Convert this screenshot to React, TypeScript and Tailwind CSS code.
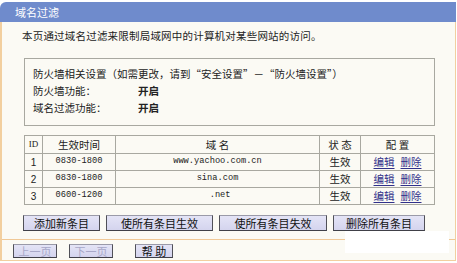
import React from "react";

const cjk = "font-['SimSun','Noto_Sans_CJK_SC',sans-serif]";

const rows = [
  { id: "1", time: "0830-1800", domain: "www.yachoo.com.cn" },
  { id: "2", time: "0830-1800", domain: "sina.com" },
  { id: "3", time: "0600-1200", domain: " .net" },
];

const Btn = ({ children, w, disabled }: { children: React.ReactNode; w: string; disabled?: boolean }) => (
  <button
    className={`${w} flex items-center justify-center border border-t-[#9a9aa8] border-l-[#505058] border-r-[#505058] border-b-[#404048] bg-gradient-to-b from-[#e4e4f6] to-[#d4d4ee] leading-none ${
      disabled ? "text-[#a8a8c8] border-[#9a9ab8]" : "text-[#111]"
    }`}
    disabled={disabled}
  >
    {children}
  </button>
);

export default function App() {
  return (
    <div className={`w-[457px] h-[263px] bg-white pt-[2px] text-[10.5px] text-[#222] ${cjk}`}>
      <div className="w-[456px] rounded-tl-[6px] overflow-hidden">
        <div className="h-[20px] bg-[#6f8bcc] text-white pl-[15px] flex items-center text-[11px]">
          域名过滤
        </div>
        <div className="relative h-[239px] bg-[#fbfaf4] border-l-2 border-r border-b border-[#f2cf9f]">
          <p className="pl-[20px] pt-[8px] leading-[12px] tracking-[0.2px]">
            本页通过域名过滤来限制局域网中的计算机对某些网站的访问。
          </p>

          <div className="ml-[22px] mt-[16px] w-[411px] border border-[#a8a8a0] pt-[6px] pb-[9px] pl-[8px] leading-[17px]">
            <div>防火墙相关设置（如需更改，请到“安全设置”－“防火墙设置”）</div>
            <div className="flex">
              <span className="w-[105px]">防火墙功能：</span>
              <span className="font-bold">开启</span>
            </div>
            <div className="flex">
              <span className="w-[105px]">域名过滤功能：</span>
              <span className="font-bold">开启</span>
            </div>
          </div>

          <div className="ml-[22px] mt-[9px] w-[411px] grid grid-cols-[18px_73px_204px_41px_74px] border-t border-l border-[#a8a8a0]">
            {["ID", "生效时间", "域 名", "状 态", "配 置"].map((h, i) => (
              <div
                key={h}
                className={`h-[18px] flex items-center border-r border-b border-[#a8a8a0] ${
                  i === 0 ? "justify-center font-['Liberation_Serif',serif] text-[9px]" : "justify-center"
                }`}
              >
                {h}
              </div>
            ))}
            {rows.map((r) => (
              <React.Fragment key={r.id}>
                <div className="h-[17px] flex items-center justify-center border-r border-b border-[#a8a8a0] font-['Liberation_Sans',sans-serif] text-[10px]">
                  {r.id}
                </div>
                <div className="h-[17px] flex items-center justify-center border-r border-b border-[#a8a8a0] font-['Liberation_Mono',monospace] text-[8.7px]">
                  {r.time}
                </div>
                <div className="h-[17px] flex items-center justify-center border-r border-b border-[#a8a8a0] font-['Liberation_Mono',monospace] text-[8.7px] whitespace-pre">
                  {r.domain}
                </div>
                <div className="h-[17px] flex items-center justify-center border-r border-b border-[#a8a8a0]">
                  生效
                </div>
                <div className="h-[17px] flex items-center justify-center gap-[6px] border-r border-b border-[#a8a8a0] text-[#30308a]">
                  <a className="underline underline-offset-2">编辑</a>
                  <a className="underline underline-offset-2">删除</a>
                </div>
              </React.Fragment>
            ))}
          </div>

          <div className="ml-[21px] mt-[10px] flex gap-[6px] h-[16px] text-[11px]">
            <Btn w="w-[77px]">添加新条目</Btn>
            <Btn w="w-[107px]">使所有条目生效</Btn>
            <Btn w="w-[108px]">使所有条目失效</Btn>
            <Btn w="w-[92px]">删除所有条目</Btn>
          </div>

          <div className="mt-[8px] border-t border-[#f0c896] pt-[4px] pl-[11px] flex h-[19px]">
            <div className="flex h-[14px] text-[11px]">
              <Btn w="w-[44px]" disabled>
                上一页
              </Btn>
              <div className="w-[12px]" />
              <Btn w="w-[44px]" disabled>
                下一页
              </Btn>
              <div className="w-[22px]" />
              <Btn w="w-[38px]">帮 助</Btn>
            </div>
          </div>

          <div className="absolute left-[343px] top-[209px] w-[104px] h-[22px] bg-white" />
        </div>
      </div>
    </div>
  );
}
